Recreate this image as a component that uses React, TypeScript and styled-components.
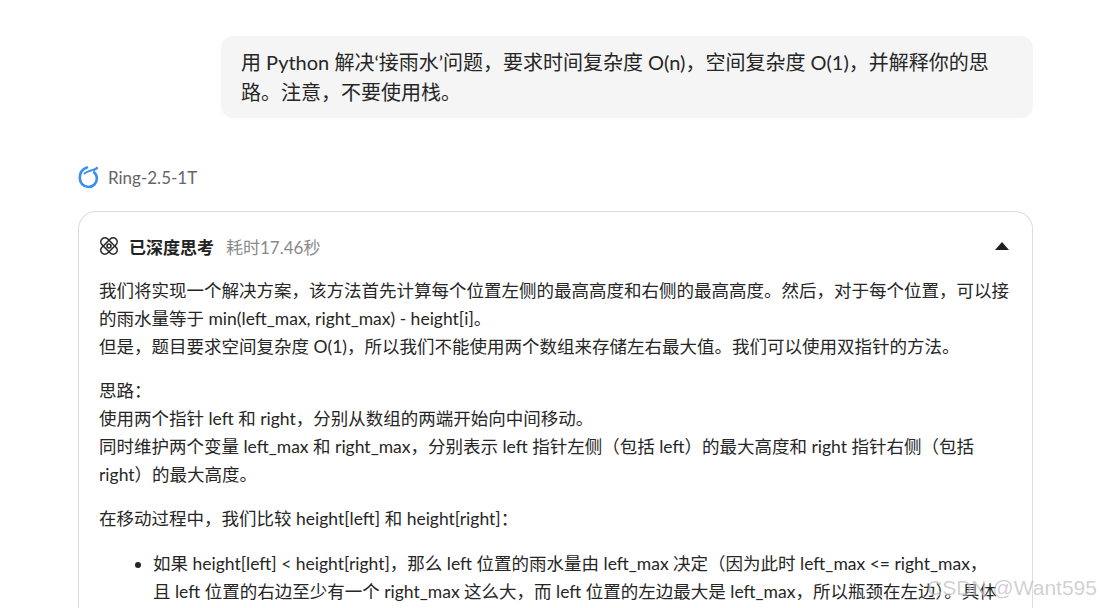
import React from 'react';
import styled, { createGlobalStyle } from 'styled-components';

const GlobalStyle = createGlobalStyle`
  html, body {
    margin: 0;
    padding: 0;
    height: 100%;
    overflow: hidden;
    background: #ffffff;
  }
  body {
    font-family: Lato, "Noto Sans CJK SC", sans-serif;
    color: #1f1f1f;
  }
`;

const Page = styled.div`
  height: 608px;
  overflow: hidden;
  padding: 36px 67px 0 78px;
  box-sizing: border-box;
  display: flex;
  flex-direction: column;
`;

const UserBubble = styled.div`
  align-self: flex-end;
  width: 812px;
  box-sizing: border-box;
  padding: 11px 20px 11px;
  background: #f5f5f5;
  border-radius: 12px;
  font-size: 20px;
  line-height: 30px;
  color: #262626;
`;

const ModelRow = styled.div`
  display: flex;
  align-items: center;
  gap: 9px;
  margin-top: 44px;
  height: 30px;
  font-size: 17px;
  color: #666666;
`;

const Card = styled.div`
  margin-top: 19px;
  border: 1px solid #dcdcdc;
  border-bottom: none;
  border-radius: 18px 18px 0 0;
  padding: 20px 20px 0;
  flex: 1;
`;

const ThinkHeader = styled.div`
  display: flex;
  align-items: center;
  height: 30px;
  margin-top: -1px;
  font-size: 17px;
`;

const ThinkTitle = styled.span`
  margin-left: 11px;
  font-weight: 600;
  color: #222222;
`;

const ThinkTime = styled.span`
  margin-left: 12px;
  color: #8a8a8a;
`;

const Caret = styled.span`
  margin-left: auto;
  margin-right: 3px;
  width: 0;
  height: 0;
  border-left: 7px solid transparent;
  border-right: 7px solid transparent;
  border-bottom: 8px solid #1f1f1f;
`;

const Paragraph = styled.p`
  margin: 0 0 16px;
  font-size: 17.5px;
  line-height: 28px;
  color: #262626;
`;

const FirstParagraph = styled(Paragraph)`
  margin-top: 16px;
`;

const BulletList = styled.ul`
  margin: 17px 0 0;
  padding: 0 12px 0 54px;
  font-size: 17.5px;
  line-height: 28px;
  color: #262626;
`;

const Watermark = styled.div`
  position: absolute;
  left: 927px;
  top: 573px;
  font-family: "Liberation Sans", sans-serif;
  font-size: 21px;
  line-height: 30px;
  color: rgba(170, 170, 170, 0.55);
  text-shadow: 1px 1px 1px rgba(255, 255, 255, 0.5);
  white-space: nowrap;
`;

const AtomSvg = styled.svg`
  margin-left: 1px;
  flex-shrink: 0;
`;

const RingLogo = () => (
  <svg width="21" height="24" viewBox="0 0 21 24" fill="none" stroke="#3b8df0" strokeLinecap="round">
    <path d="M9 2.5C4.5 4 1.8 8 1.8 13c0 5.2 3.8 9 8.6 9 4.9 0 8.4-3.8 8.4-8.6 0-2.4-.9-4.4-2.6-5.9" strokeWidth="2.6" />
    <path d="M6.5 8.5C9.5 6.4 14 5 19 3.6" strokeWidth="2" />
    <path d="M19 2.6c-1.3.6-2.4 1.8-3 3.4" strokeWidth="1.6" />
  </svg>
);

const AtomIcon = () => (
  <AtomSvg width="18" height="18" viewBox="0 0 20 20" fill="none" stroke="#2b2b2b" strokeWidth="1.8">
    <rect x="-1" y="5.5" width="22" height="9" rx="4.5" transform="rotate(45 10 10)" />
    <rect x="-1" y="5.5" width="22" height="9" rx="4.5" transform="rotate(-45 10 10)" />
    <circle cx="10" cy="10" r="2.2" />
  </AtomSvg>
);

const App: React.FC = () => {
  return (
    <>
      <GlobalStyle />
      <Page>
        <UserBubble>
          用 Python 解决‘接雨水’问题，要求时间复杂度 O(n)，空间复杂度 O(1)，并解释你的思路。注意，不要使用栈。
        </UserBubble>
        <ModelRow>
          <RingLogo />
          Ring-2.5-1T
        </ModelRow>
        <Card>
          <ThinkHeader>
            <AtomIcon />
            <ThinkTitle>已深度思考</ThinkTitle>
            <ThinkTime>耗时17.46秒</ThinkTime>
            <Caret />
          </ThinkHeader>
          <FirstParagraph>
            我们将实现一个解决方案，该方法首先计算每个位置左侧的最高高度和右侧的最高高度。然后，对于每个位置，可以接的雨水量等于 min(left_max, right_max) - height[i]。
            <br />
            但是，题目要求空间复杂度 O(1)，所以我们不能使用两个数组来存储左右最大值。我们可以使用双指针的方法。
          </FirstParagraph>
          <Paragraph>
            思路：
            <br />
            使用两个指针 left 和 right，分别从数组的两端开始向中间移动。
            <br />
            同时维护两个变量 left_max 和 right_max，分别表示 left 指针左侧（包括 left）的最大高度和 right 指针右侧（包括 right）的最大高度。
          </Paragraph>
          <Paragraph>在移动过程中，我们比较 height[left] 和 height[right]：</Paragraph>
          <BulletList>
            <li>
              如果 height[left] &lt; height[right]，那么 left 位置的雨水量由 left_max 决定（因为此时 left_max &lt;= right_max，且 left 位置的右边至少有一个 right_max 这么大，而 left 位置的左边最大是 left_max，所以瓶颈在左边）。具体
            </li>
          </BulletList>
        </Card>
      </Page>
      <Watermark>CSDN @Want595</Watermark>
    </>
  );
};

export default App;
